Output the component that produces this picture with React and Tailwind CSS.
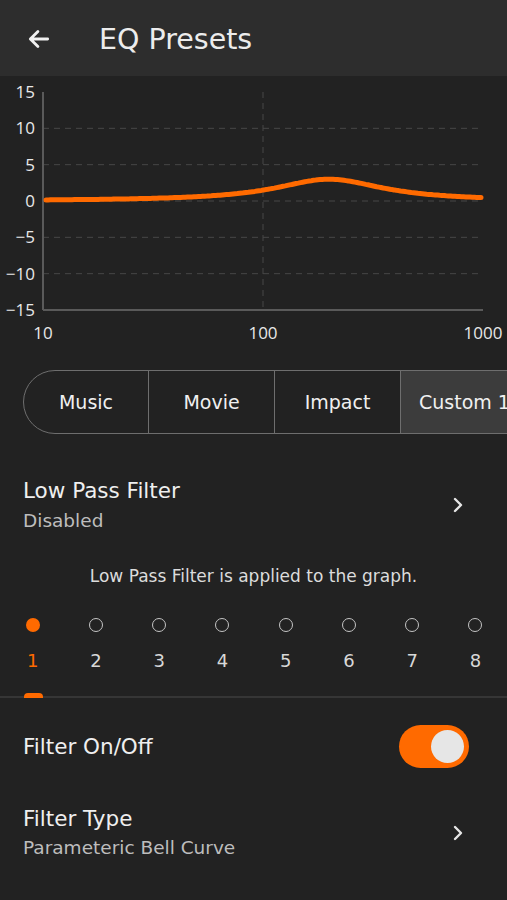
import React from "react";

const ORANGE = "#ff6a00";

function Chart() {
  const x0 = 43, x1 = 483;
  const yTop = 16;
  const pxPerDb = 218 / 30;
  const y0 = yTop + 15 * pxPerDb;
  const yOf = (db) => y0 - db * pxPerDb;
  const pts = [];
  for (let i = 0; i <= 200; i++) {
    const x = 46 + (481 - 46) * (i / 200);
    const dec = ((x - x0) / (x1 - x0)) * 2;
    const d = dec - 1.3;
    const g = 3 / (1 + (d / 0.3) * (d / 0.3));
    pts.push(`${x.toFixed(1)},${yOf(g).toFixed(1)}`);
  }
  const yLabels = [15, 10, 5, 0, -5, -10, -15];
  return (
    <svg width="507" height="280" viewBox="0 0 507 280" className="block">
      {[10, 5, 0, -5, -10].map((v) => (
        <line key={v} x1={x0} x2={x1} y1={yOf(v)} y2={yOf(v)} stroke="#474747" strokeWidth="1" strokeDasharray="6 5" />
      ))}
      <line x1="263" x2="263" y1={yTop} y2={yOf(-15)} stroke="#474747" strokeWidth="1" strokeDasharray="6 5" />
      <line x1={x0} x2={x0} y1={yTop} y2={yOf(-15)} stroke="#5a5a5a" strokeWidth="2" />
      <line x1={x0} x2={x1} y1={yOf(-15)} y2={yOf(-15)} stroke="#5a5a5a" strokeWidth="2" />
      {yLabels.map((v) => (
        <text key={v} x="35" y={yOf(v) + 6} textAnchor="end" fill="#e8e8e8" fontSize="17" fontFamily="'Open Sans', sans-serif">
          {v < 0 ? "\u2212" + Math.abs(v) : v}
        </text>
      ))}
      {[[43, "10"], [263, "100"], [483, "1000"]].map(([x, t]) => (
        <text key={t} x={x} y="263" textAnchor="middle" fill="#e8e8e8" fontSize="17" fontFamily="'Open Sans', sans-serif">
          {t}
        </text>
      ))}
      <polyline points={pts.join(" ")} fill="none" stroke={ORANGE} strokeWidth="5" strokeLinecap="round" strokeLinejoin="round" />
    </svg>
  );
}

function Chevron() {
  return (
    <svg width="14" height="18" viewBox="0 0 14 18" className="block">
      <path d="M4 3 L10 9 L4 15" fill="none" stroke="#e6e6e6" strokeWidth="2.4" strokeLinecap="round" strokeLinejoin="round" />
    </svg>
  );
}

export default function App() {
  const segs = ["Music", "Movie", "Impact", "Custom 1"];
  const nums = [1, 2, 3, 4, 5, 6, 7, 8];
  return (
    <div className="w-[507px] h-[900px] overflow-hidden bg-[#222222] text-[#ededed]" style={{ fontFamily: "'DejaVu Sans', sans-serif" }}>
      <div className="h-[76px] bg-[#2d2d2d] flex items-center">
        <div className="w-[99px] pl-[26px] flex items-center mt-[2px]">
          <svg width="26" height="26" viewBox="0 0 24 24" className="block">
            <path d="M20 12H4.5M11 5l-7 7 7 7" fill="none" stroke="#f0f0f0" strokeWidth="2.6" strokeLinecap="round" strokeLinejoin="round" />
          </svg>
        </div>
        <div className="text-[28.5px] leading-none text-[#ececec] mt-[5px]">EQ Presets</div>
      </div>

      <Chart />

      <div className="mt-[14px] pl-[23px] flex overflow-hidden">
        <div className="flex h-[64px] border border-[#6e6e6e] rounded-l-[32px] shrink-0">
          {segs.map((s, i) => (
            <div
              key={s}
              className={
                "shrink-0 flex items-center text-[19px] text-[#f0f0f0] " +
                (i === 0 ? "w-[124px] justify-center " : "w-[126px] border-l border-[#6e6e6e] justify-center ") +
                (i === 3 ? "bg-[#3c3c3c] !justify-start pl-[18px]" : "")
              }
            >
              <span className="whitespace-nowrap">{s}</span>
            </div>
          ))}
        </div>
      </div>

      <div className="mt-[43px] pl-[23px] pr-[42px] flex items-center justify-between">
        <div>
          <div className="text-[21.5px] leading-[28px] text-[#efefef]">Low Pass Filter</div>
          <div className="text-[18.5px] leading-[24px] text-[#bdbdbd] mt-[4px]">Disabled</div>
        </div>
        <Chevron />
      </div>

      <div className="mt-[33px] text-center text-[17px] leading-[20px] text-[#dcdcdc]">Low Pass Filter is applied to the graph.</div>

      <div className="mt-[32px] flex pl-[1px]">
        {nums.map((n) => (
          <div key={n} className="w-[63.3px] flex flex-col items-center">
            {n === 1 ? (
              <div className="w-[14px] h-[14px] rounded-full bg-[#ff6a00]" />
            ) : (
              <div className="w-[14px] h-[14px] rounded-full border-[1.8px] border-[#c4c4c4]" />
            )}
            <div className={"mt-[19px] text-[18px] leading-[20px] " + (n === 1 ? "text-[#ff6a00]" : "text-[#d8d8d8]")}>{n}</div>
          </div>
        ))}
      </div>

      <div className="mt-[25px] relative h-[2px] bg-[#363636]">
        <div className="absolute left-[24px] bottom-0 w-[19px] h-[5px] rounded-t-[4px] bg-[#ff6a00]" />
      </div>

      <div className="mt-[27px] pl-[23px] pr-[38px] flex items-center justify-between">
        <div className="text-[21.5px] leading-[28px] text-[#efefef]">Filter On/Off</div>
        <div className="w-[70px] h-[43px] rounded-full bg-[#ff6a00] flex items-center justify-end pr-[5px]">
          <div className="w-[33px] h-[33px] rounded-full bg-[#e6e6e6]" />
        </div>
      </div>

      <div className="mt-[37px] pl-[23px] pr-[42px] flex items-center justify-between">
        <div>
          <div className="text-[21.5px] leading-[28px] text-[#efefef]">Filter Type</div>
          <div className="text-[18.5px] leading-[24px] text-[#bdbdbd] mt-[3px]">Parameteric Bell Curve</div>
        </div>
        <Chevron />
      </div>
    </div>
  );
}
